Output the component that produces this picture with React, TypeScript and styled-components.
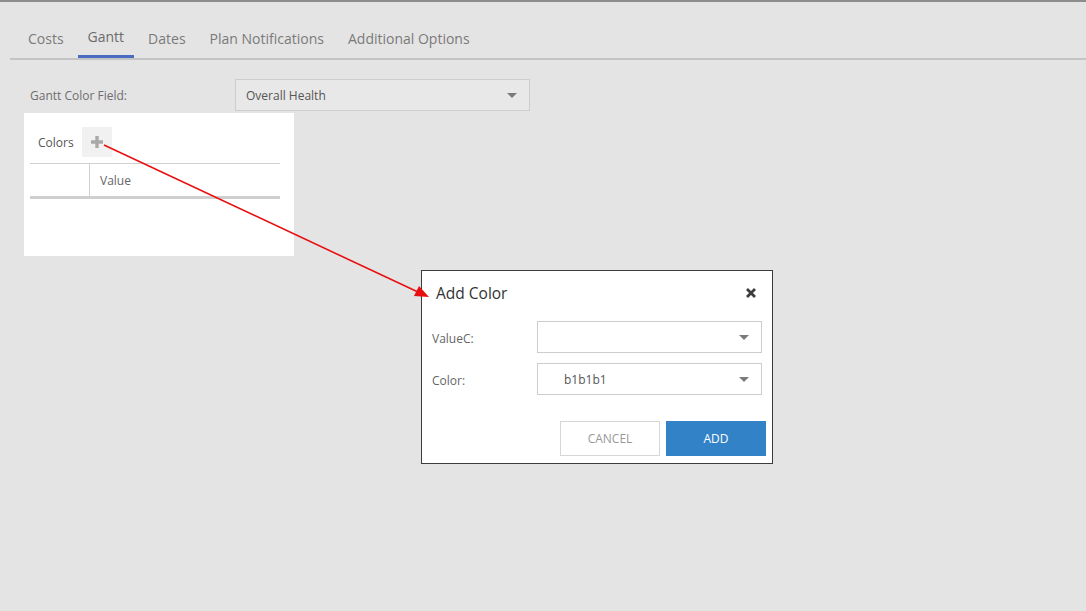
import styled, { createGlobalStyle } from 'styled-components';

const GlobalStyle = createGlobalStyle`
	html, body {
		margin: 0;
		padding: 0;
		background: #e4e4e4;
		font-family: 'Open Sans', 'Noto Sans', sans-serif;
	}
	* {
		box-sizing: border-box;
	}
`;

const Page = styled.div`
	position: relative;
	width: 1086px;
	height: 611px;
	overflow: hidden;
	border-top: 2px solid #8c8c8c;
	background: #e4e4e4;
`;

const TabBar = styled.nav`
	display: flex;
	align-items: flex-end;
	gap: 4px;
	margin: 27px 0 0 10px;
	padding-left: 8px;
	border-bottom: 2px solid #c4c4c4;
`;

const Tab = styled.div<{ $active?: boolean }>`
	padding: 0 10px 8px;
	font-size: 14px;
	line-height: 20px;
	color: ${(p) => (p.$active ? '#6b6b6b' : '#7a7a7a')};
	border-bottom: 3px solid ${(p) => (p.$active ? '#4a6cc0' : 'transparent')};
	margin-bottom: -2px;
	position: relative;
	top: ${(p) => (p.$active ? '-2px' : '0')};
`;

const FieldRow = styled.div`
	display: flex;
	align-items: center;
	margin: 19px 0 0 30px;
`;

const FieldLabel = styled.span`
	width: 205px;
	font-size: 12px;
	color: #6e6e6e;
`;

const Select = styled.div<{ $width: number; $bg?: string }>`
	display: flex;
	align-items: center;
	justify-content: space-between;
	width: ${(p) => p.$width}px;
	height: 32px;
	padding: 0 12px 0 10px;
	border: 1px solid #cdcdcd;
	background: ${(p) => p.$bg ?? '#fff'};
	font-size: 12px;
	color: #555;
`;

const Caret = styled.span`
	width: 0;
	height: 0;
	border-left: 5px solid transparent;
	border-right: 5px solid transparent;
	border-top: 5px solid #7a7a7a;
`;

const Panel = styled.section`
	width: 270px;
	height: 143px;
	margin: 2px 0 0 24px;
	background: #fff;
	padding: 14px 14px 0 6px;
`;

const PanelHeader = styled.div`
	display: flex;
	align-items: center;
	gap: 8px;
	padding-left: 8px;
	height: 30px;
	margin-bottom: 6px;
`;

const PanelTitle = styled.span`
	font-size: 12px;
	color: #555;
`;

const PlusButton = styled.button`
	width: 30px;
	height: 30px;
	border: none;
	background: #f1f1f1;
	display: flex;
	align-items: center;
	justify-content: center;
	padding: 0;
`;

const Table = styled.div`
	display: grid;
	grid-template-columns: 59px 1fr;
	height: 36px;
	border-top: 1px solid #d0d0d0;
	border-bottom: 3px solid #cfcfcf;
`;

const HeadCell = styled.div<{ $divider?: boolean }>`
	display: flex;
	align-items: center;
	padding-left: 10px;
	font-size: 12px;
	color: #666;
	border-left: ${(p) => (p.$divider ? '1px solid #d0d0d0' : 'none')};
`;

const Dialog = styled.div`
	position: absolute;
	left: 421px;
	top: 268px;
	width: 352px;
	height: 194px;
	background: #fff;
	border: 1.5px solid #3c3c3c;
	display: flex;
	flex-direction: column;
`;

const DialogHeader = styled.div`
	display: flex;
	align-items: center;
	justify-content: space-between;
	padding: 9px 15px 0 14px;
	height: 34px;
`;

const DialogTitle = styled.h2`
	margin: 0;
	font-size: 15.5px;
	font-weight: 400;
	color: #333;
`;

const DialogBody = styled.div`
	display: flex;
	flex-direction: column;
	gap: 10px;
	padding: 16px 10px 0 10px;
`;

const FormRow = styled.div`
	display: flex;
	align-items: center;
`;

const FormLabel = styled.span`
	width: 105px;
	font-size: 12px;
	color: #666;
	padding-top: 2px;
`;

const SelectValue = styled.span`
	padding-left: 16px;
`;

const DialogFooter = styled.div`
	display: flex;
	justify-content: flex-end;
	gap: 6px;
	padding: 0 6px 0 0;
	margin-top: 26px;
`;

const Button = styled.button<{ $primary?: boolean }>`
	width: 100px;
	height: 35px;
	font-family: inherit;
	font-size: 12px;
	border: 1px solid ${(p) => (p.$primary ? '#3282c8' : '#d6d6d6')};
	background: ${(p) => (p.$primary ? '#3282c8' : '#fff')};
	color: ${(p) => (p.$primary ? '#fff' : '#999')};
	padding: 0;
`;

const ArrowLayer = styled.svg`
	position: absolute;
	left: 0;
	top: 0;
	pointer-events: none;
`;

const PlusIcon = () => (
	<svg width="14" height="14" viewBox="0 0 14 14">
		<path d="M5.3 1h3.4v4.3H13v3.4H8.7V13H5.3V8.7H1V5.3h4.3z" fill="#a9a9a9" />
	</svg>
);

const CloseIcon = () => (
	<svg width="12" height="12" viewBox="0 0 12 12">
		<path d="M2 2l8 8M10 2l-8 8" stroke="#3d3d3d" strokeWidth="2.8" strokeLinecap="butt" />
	</svg>
);

const tabs = ['Costs', 'Gantt', 'Dates', 'Plan Notifications', 'Additional Options'];

const App = () => {
	return (
		<>
			<GlobalStyle />
			<Page>
				<TabBar>
					{tabs.map((t) => (
						<Tab key={t} $active={t === 'Gantt'}>
							{t}
						</Tab>
					))}
				</TabBar>
				<FieldRow>
					<FieldLabel>Gantt Color Field:</FieldLabel>
					<Select $width={295} $bg="#e8e8e8">
						<span>Overall Health</span>
						<Caret />
					</Select>
				</FieldRow>
				<Panel>
					<PanelHeader>
						<PanelTitle>Colors</PanelTitle>
						<PlusButton>
							<PlusIcon />
						</PlusButton>
					</PanelHeader>
					<Table>
						<HeadCell />
						<HeadCell $divider>Value</HeadCell>
					</Table>
				</Panel>

				<Dialog>
					<DialogHeader>
						<DialogTitle>Add Color</DialogTitle>
						<CloseIcon />
					</DialogHeader>
					<DialogBody>
						<FormRow>
							<FormLabel>ValueC:</FormLabel>
							<Select $width={225}>
								<span />
								<Caret />
							</Select>
						</FormRow>
						<FormRow>
							<FormLabel>Color:</FormLabel>
							<Select $width={225}>
								<SelectValue>b1b1b1</SelectValue>
								<Caret />
							</Select>
						</FormRow>
					</DialogBody>
					<DialogFooter>
						<Button>CANCEL</Button>
						<Button $primary>ADD</Button>
					</DialogFooter>
				</Dialog>

				<ArrowLayer width="1086" height="611" viewBox="0 0 1086 611">
					<line x1="104" y1="143" x2="418" y2="290" stroke="#e81010" strokeWidth="1.6" />
					<path d="M429 295 L414 294 L419 284 Z" fill="#e81010" />
				</ArrowLayer>
			</Page>
		</>
	);
};

export default App;
